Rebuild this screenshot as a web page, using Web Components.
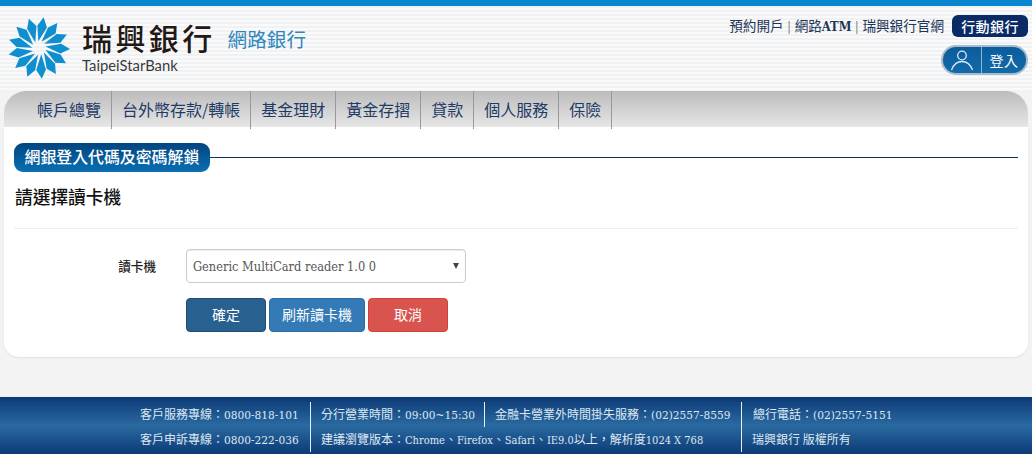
<!DOCTYPE html>
<html lang="zh-Hant">
<head>
<meta charset="utf-8">
<title>網路銀行</title>
<style>
    html, body { margin: 0; padding: 0; background: #f3f3f3; }
    body { font-family: "DejaVu Serif Condensed", "Noto Sans CJK TC", serif; }
</style>
</head>
<body>
<bank-header></bank-header>
<bank-nav></bank-nav>
<unlock-panel></unlock-panel>
<bank-footer></bank-footer>

<script>
const CJK = '"Noto Sans CJK TC", sans-serif';
const LATIN = '"DejaVu Serif Condensed", "DejaVu Serif", "Noto Sans CJK TC", serif';

class bankLogo extends HTMLElement{
    constructor(){
        super();
        this.attachShadow({mode : "open"});
        let petals = '';
        const count = 13;
        for (let i = 0; i < count; i++) {
            petals += `<path transform="rotate(${(i * 360 / count + 8).toFixed(2)})" d="M-1.6 -6.5 L-4.7 -22 L0.3 -31 L5 -21.5 Z"/>`;
        }
        this.shadowRoot.innerHTML = `
                    <style>
                        :host { display: flex; align-items: flex-start; margin-top: 1px; }
                        svg { display: block; width: 64px; height: 64px; margin: 0 11px 0 5px; }
                        .names { display: flex; flex-direction: column; padding-top: 3px; }
                        .zh {
                            font: 500 30px/36px ${CJK};
                            letter-spacing: 3.4px;
                            color: #231815;
                        }
                        .en {
                            font: 400 14.8px/16px Lato, sans-serif;
                            color: #3a3a3a;
                            margin-top: 2px;
                        }
                        .sub {
                            font: 400 19.6px/28px ${CJK};
                            color: #2f86bd;
                            margin: 9px 0 0 12px;
                        }
                    </style>
                    <svg viewBox="-32 -32 64 64" fill="#0f8fd0" aria-hidden="true">${petals}</svg>
                    <div class="names">
                        <span class="zh">瑞興銀行</span>
                        <span class="en">TaipeiStarBank</span>
                    </div>
                    <span class="sub">網路銀行</span>
                `;
    }
}

class bankHeader extends HTMLElement{
    constructor(){
        super();
        this.attachShadow({mode : "open"});
        this.shadowRoot.innerHTML = `
                    <style>
                        :host {
                            display: flex;
                            justify-content: space-between;
                            box-sizing: border-box;
                            height: 91px;
                            padding: 9px 4px 0 2px;
                            border-top: 6px solid #0a85cf;
                            background: repeating-linear-gradient(#f0f1f2 0 2px, #fafafa 2px 4px);
                        }
                        .right { display: flex; flex-direction: column; align-items: flex-end; gap: 8px; }
                        .links { display: flex; align-items: center; gap: 8px; height: 22px; font: 13.6px/22px ${LATIN}; color: #1d3557; }
                        .links i { font-style: normal; color: #777; margin: 0 3.7px; font-size: 12px; }
                        .links b { font-weight: 700; font-size: 12.8px; }
                        .zh { font-family: ${CJK}; }
                        .app {
                            width: 76px; height: 22px; border-radius: 6px;
                            background: #0a2a66; color: #fff;
                            font: 500 14px/22px ${CJK};
                            letter-spacing: .4px;
                            text-align: center;
                        }
                        .login {
                            display: flex; align-items: center;
                            box-sizing: border-box;
                            width: 87px; height: 30px;
                            border: 2px solid #a5bccd; border-radius: 15px;
                            background: linear-gradient(#0b5d9c, #126aa8);
                            color: #fff;
                            font: 14px/26px ${CJK};
                        }
                        .login .who { width: 38px; display: flex; justify-content: center; border-right: 1px solid #8fb6d2; height: 26px; align-items: center; }
                        .login .txt { flex: 1; text-align: center; letter-spacing: .5px; }
                    </style>
                    <bank-logo></bank-logo>
                    <div class="right">
                        <div class="links">
                            <span><span class="zh">預約開戶</span><i>|</i><span class="zh">網路</span><b>ATM</b><i>|</i><span class="zh">瑞興銀行官網</span></span>
                            <span class="app">行動銀行</span>
                        </div>
                        <div class="login">
                            <span class="who">
                                <svg width="24" height="22" viewBox="0 0 24 22" fill="none" stroke="#dcebf5" stroke-width="1.3">
                                    <circle cx="12" cy="6.5" r="4.3"/>
                                    <path d="M1.5 21 C4 14.5 8 12.5 12 12.5 C16 12.5 20 14.5 22.5 21"/>
                                </svg>
                            </span>
                            <span class="txt">登入</span>
                        </div>
                    </div>
                `;
    }
}

class bankNav extends HTMLElement{
    constructor(){
        super();
        this.attachShadow({mode : "open"});
        const items = ['帳戶總覽', '台外幣存款/轉帳', '基金理財', '黃金存摺', '貸款', '個人服務', '保險'];
        this.shadowRoot.innerHTML = `
                    <style>
                        :host {
                            display: flex;
                            box-sizing: border-box;
                            height: 36px;
                            margin: 0 4px;
                            padding-left: 23px;
                            border-radius: 22px 22px 0 0;
                            background: linear-gradient(#bcbcbc, #e6e6e6);
                            font: 16px/36px ${CJK};
                            color: #1e3a66;
                        }
                        span {
                            height: 38px;
                            padding: 0 10px;
                            border-right: 1px solid #999;
                        }
                    </style>
                    ${items.map(t => `<span>${t}</span>`).join('')}
                `;
    }
}

class panelHeading extends HTMLElement{
    constructor(){
        super();
        this.attachShadow({mode : "open"});
        this.shadowRoot.innerHTML = `
                    <style>
                        :host { display: flex; align-items: center; }
                        .pill {
                            height: 29px; padding: 0 10.5px;
                            border-radius: 9px;
                            background: linear-gradient(#00457f, #0b6fb2);
                            color: #fff;
                            font: 500 15.9px/28px ${CJK};
                            white-space: nowrap;
                        }
                        .line { flex: 1; height: 1px; background: #0c3358; }
                    </style>
                    <div class="pill"><slot></slot></div>
                    <div class="line"></div>
                `;
    }
}

class actionButton extends HTMLElement{
    constructor(){
        super();
        this.attachShadow({mode : "open"});
        this.shadowRoot.innerHTML = `
                    <style>
                        :host { display: block; }
                        button {
                            display: block;
                            box-sizing: border-box;
                            width: var(--w, 80px);
                            height: 34px;
                            padding: 0 0 2px;
                            border: 1px solid var(--bd);
                            border-radius: 4px;
                            background: var(--bg);
                            color: #fff;
                            font: 14px/20px ${CJK};
                        }
                    </style>
                    <button><slot></slot></button>
                `;
    }
}

class readerSelect extends HTMLElement{
    constructor(){
        super();
        this.attachShadow({mode : "open"});
        this.shadowRoot.innerHTML = `
                    <style>
                        :host { display: block; position: relative; width: 280px; height: 34px; }
                        select {
                            appearance: none;
                            display: block;
                            box-sizing: border-box;
                            width: 100%; height: 34px;
                            padding: 0 6px;
                            border: 1px solid #ccc;
                            border-radius: 4px;
                            background: #fff;
                            color: #555;
                            font: 12.7px ${LATIN};
                            box-shadow: inset 0 1px 1px rgba(0, 0, 0, .075);
                        }
                        .arrow {
                            position: absolute; right: 7px; top: 14px;
                            border-left: 3px solid transparent;
                            border-right: 3px solid transparent;
                            border-top: 6px solid #444;
                        }
                    </style>
                    <select><option>Generic MultiCard reader 1.0 0</option></select>
                    <span class="arrow"></span>
                `;
    }
}

class unlockPanel extends HTMLElement{
    constructor(){
        super();
        this.attachShadow({mode : "open"});
        this.shadowRoot.innerHTML = `
                    <style>
                        :host {
                            display: block;
                            box-sizing: border-box;
                            height: 230px;
                            margin: 0 4px 40px;
                            padding: 16px 10px 0;
                            border-radius: 0 0 15px 15px;
                            background: #fff;
                            box-shadow: 0 1px 2px rgba(0, 0, 0, .08);
                        }
                        h2 {
                            margin: 11px 0 0 1px;
                            font: 500 17.7px/26px ${CJK};
                            color: #111;
                        }
                        hr { margin: 19px 0 20px; border: 0; border-top: 1px solid #eee; }
                        .row { display: flex; align-items: center; }
                        label {
                            width: 172px;
                            padding-right: 30px;
                            box-sizing: border-box;
                            text-align: right;
                            font: 500 12.6px/18px ${CJK};
                            color: #222;
                        }
                        .buttons { display: flex; gap: 3px; margin: 15px 0 0 172px; }
                    </style>
                    <panel-heading>網銀登入代碼及密碼解鎖</panel-heading>
                    <h2>請選擇讀卡機</h2>
                    <hr>
                    <div class="row">
                        <label>讀卡機</label>
                        <reader-select></reader-select>
                    </div>
                    <div class="buttons">
                        <action-button style="--bg:#286090;--bd:#204d74">確定</action-button>
                        <action-button style="--bg:#337ab7;--bd:#2e6da4;--w:96px">刷新讀卡機</action-button>
                        <action-button style="--bg:#d9534f;--bd:#d43f3a">取消</action-button>
                    </div>
                `;
    }
}

class bankFooter extends HTMLElement{
    constructor(){
        super();
        this.attachShadow({mode : "open"});
        this.shadowRoot.innerHTML = `
                    <style>
                        :host {
                            display: grid;
                            grid-template-columns: 180px 174px 257px auto;
                            grid-auto-rows: 25px;
                            box-sizing: border-box;
                            height: 57px;
                            padding: 5px 0 0 130px;
                            background: linear-gradient(#0c3a76, #2a6aa0 50%, #0c3a76);
                            color: #dfe8f2;
                            font: 11.8px/24px ${LATIN};
                        }
                        div { padding: 0 0 0 10px; white-space: nowrap; }
                        div:nth-child(1), div:nth-child(5) { padding-left: 11px; }
                        .sep { border-left: 1px solid #e8eef5; }
                        .wide { grid-column: span 2; }
                        .zh { font-family: ${CJK}; font-size: 12px; }
                        .tight { font-size: 11px; }
                    </style>
                    <div><span class="zh">客戶服務專線：</span>0800-818-101</div>
                    <div class="sep"><span class="zh">分行營業時間：</span>09:00~15:30</div>
                    <div class="sep"><span class="zh">金融卡營業外時間掛失服務：</span>(02)2557-8559</div>
                    <div class="sep"><span class="zh">總行電話：</span>(02)2557-5151</div>
                    <div><span class="zh">客戶申訴專線：</span>0800-222-036</div>
                    <div class="sep wide"><span class="zh">建議瀏覽版本：</span><span class="tight">Chrome</span><span class="zh">、</span><span class="tight">Firefox</span><span class="zh">、</span><span class="tight">Safari</span><span class="zh">、</span><span class="tight">IE9.0</span><span class="zh">以上，解析度</span><span class="tight">1024 X 768</span></div>
                    <div class="sep"><span class="zh">瑞興銀行 版權所有</span></div>
                `;
    }
}

customElements.define('bank-logo', bankLogo)
customElements.define('bank-header', bankHeader)
customElements.define('bank-nav', bankNav)
customElements.define('panel-heading', panelHeading)
customElements.define('action-button', actionButton)
customElements.define('reader-select', readerSelect)
customElements.define('unlock-panel', unlockPanel)
customElements.define('bank-footer', bankFooter)
</script>
</body>
</html>
